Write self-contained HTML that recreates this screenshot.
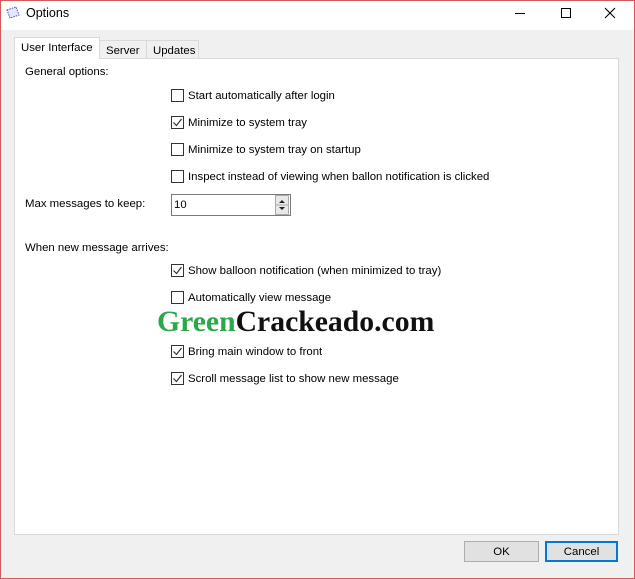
<!DOCTYPE html><html><head><style>
*{margin:0;padding:0;box-sizing:border-box}
body{width:635px;height:579px;background:#f0f0f0;font-family:"Liberation Sans",sans-serif;font-size:11.4px;color:#000;position:relative;overflow:hidden}
.win{position:absolute;left:0;top:0;width:635px;height:579px;border:1px solid #d45a5a}
.title{position:absolute;left:1px;top:1px;width:633px;height:29px;background:#fff}
.a{position:absolute;white-space:nowrap}
.t{margin-top:1px}
.cb{position:absolute;width:13px;height:13px;border:1px solid #333;background:#fff}
.cb svg{position:absolute;left:0;top:0}
.panel{position:absolute;left:14px;top:58px;width:605px;height:477px;background:#fff;border:1px solid #d9d9d9}
.tab{position:absolute;border:1px solid #d9d9d9;border-bottom:none;background:#f0f0f0;height:18px;top:40px;padding:4px 0 0 6px}
.btn{position:absolute;top:541px;width:75px;height:21px;background:#e1e1e1;border:1px solid #adadad;text-align:center;line-height:21px}
</style></head><body>
<div class="win"></div>
<div class="title"></div>
<svg class="a" style="left:5px;top:6px" width="16" height="14"><path d="M2 4 L11 1 L14 9 L5 12 Z" fill="#e6e6ff" stroke="#5050b0" stroke-width="1" stroke-dasharray="1.5,1"/></svg>
<div class="a" style="left:26px;top:6px;font-size:12.5px">Options</div>
<div class="a" style="left:515px;top:13px;width:10px;height:1px;background:#000"></div>
<div class="a" style="left:561px;top:8px;width:10px;height:10px;border:1px solid #000"></div>
<svg class="a" style="left:604px;top:7px" width="12" height="12"><path d="M1 1L11 11M11 1L1 11" stroke="#000" stroke-width="1.1"/></svg>
<div class="panel"></div>
<div class="tab" style="left:99px;width:48px;">Server</div>
<div class="tab" style="left:146px;width:53px;">Updates</div>
<div class="tab" style="left:14px;top:37px;width:86px;height:22px;background:#fff;padding-top:4px">User Interface</div>
<div class="a" style="left:25px;top:66px">General options:</div>
<div class="cb" style="left:171px;top:89px"></div><div class="a t" style="left:188px;top:89px">Start automatically after login</div>
<div class="cb" style="left:171px;top:116px"><svg width="11" height="11"><path d="M1.5 5.5L4.5 8.5L9.5 2" stroke="#333" stroke-width="1.2" fill="none"/></svg></div><div class="a t" style="left:188px;top:116px">Minimize to system tray</div>
<div class="cb" style="left:171px;top:143px"></div><div class="a t" style="left:188px;top:143px">Minimize to system tray on startup</div>
<div class="cb" style="left:171px;top:170px"></div><div class="a t" style="left:188px;top:170px">Inspect instead of viewing when ballon notification is clicked</div>
<div class="a" style="left:25px;top:198px">Max messages to keep:</div>
<div class="a" style="left:171px;top:194px;width:120px;height:22px;border:1px solid #7a7a7a;background:#fff;padding:4px 0 0 2px">10</div>
<div class="a" style="left:275px;top:195px;width:14px;height:20px;border:1px solid #aaa;background:#e8e8e8"></div>
<svg class="a" style="left:276px;top:196px" width="12" height="18"><path d="M3 7L6 4L9 7Z M3 11L6 14L9 11Z" fill="#222"/><path d="M0 9H12" stroke="#aaa"/></svg>
<div class="a" style="left:25px;top:242px">When new message arrives:</div>
<div class="cb" style="left:171px;top:264px"><svg width="11" height="11"><path d="M1.5 5.5L4.5 8.5L9.5 2" stroke="#333" stroke-width="1.2" fill="none"/></svg></div><div class="a t" style="left:188px;top:264px">Show balloon notification (when minimized to tray)</div>
<div class="cb" style="left:171px;top:291px"></div><div class="a t" style="left:188px;top:291px">Automatically view message</div>
<div class="cb" style="left:171px;top:345px"><svg width="11" height="11"><path d="M1.5 5.5L4.5 8.5L9.5 2" stroke="#333" stroke-width="1.2" fill="none"/></svg></div><div class="a t" style="left:188px;top:345px">Bring main window to front</div>
<div class="cb" style="left:171px;top:372px"><svg width="11" height="11"><path d="M1.5 5.5L4.5 8.5L9.5 2" stroke="#333" stroke-width="1.2" fill="none"/></svg></div><div class="a t" style="left:188px;top:372px">Scroll message list to show new message</div>
<div class="a" style="left:157px;top:306px;font-family:'Liberation Serif',serif;font-weight:bold;font-size:29.7px"><span style="color:#2aa84a">Green</span><span style="color:#111">Crackeado.com</span></div>
<div class="btn" style="left:464px">OK</div>
<div class="btn" style="left:545px;width:73px;border:2px solid #0078d7;line-height:19px">Cancel</div>
</body></html>
